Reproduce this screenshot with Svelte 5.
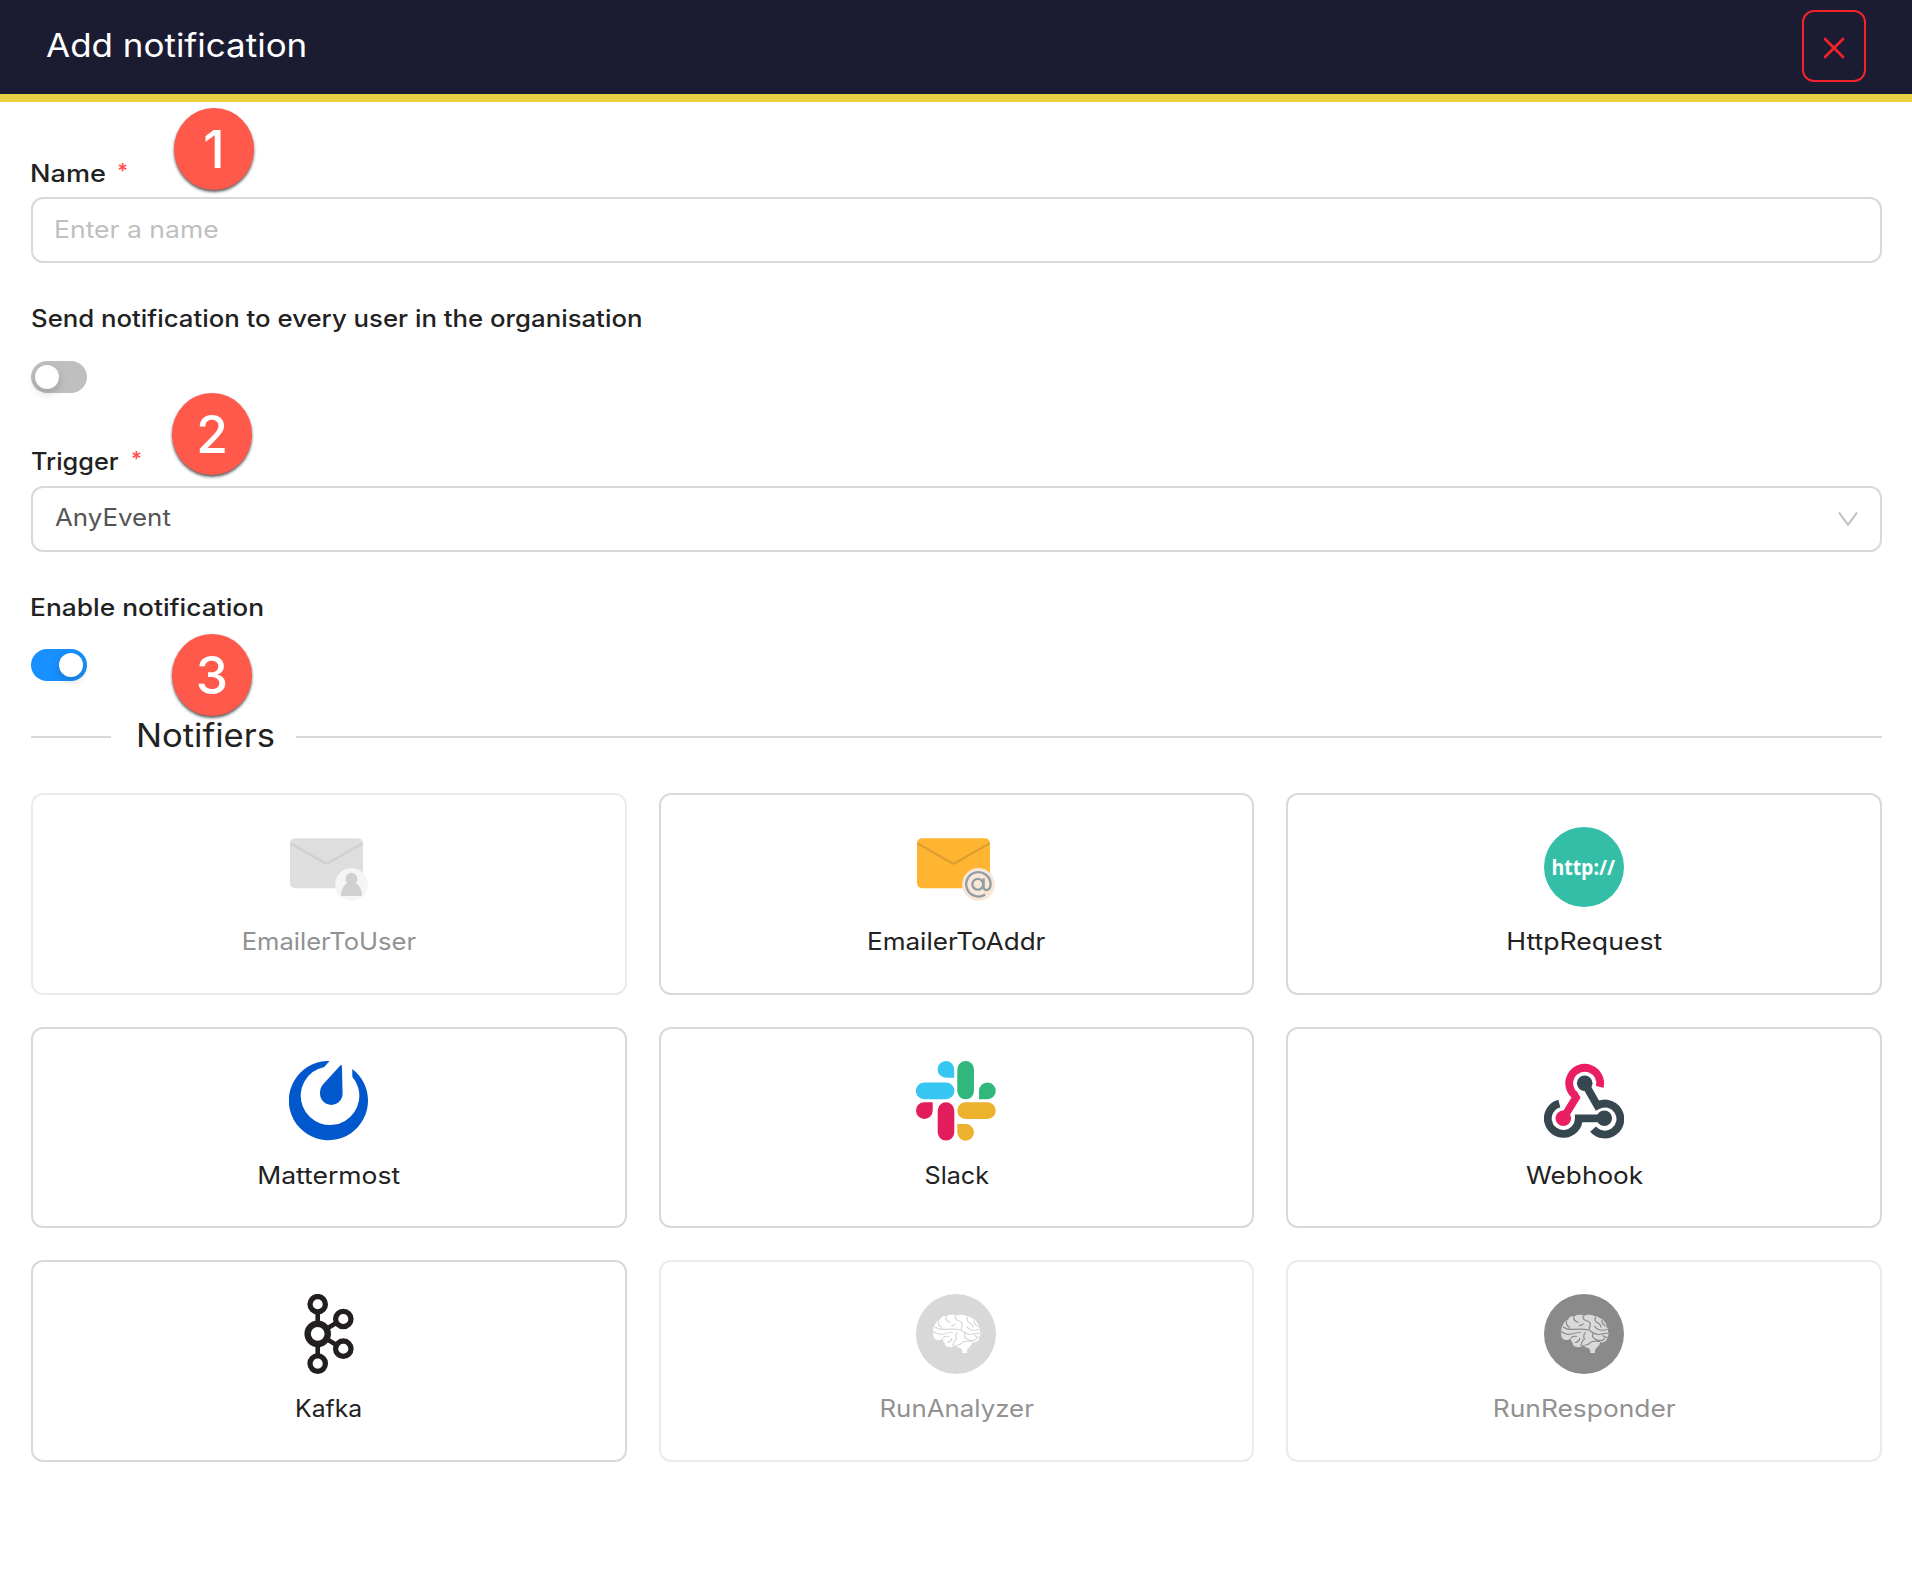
<script>
  const notifiers = [
    { name: 'EmailerToUser', icon: 'user', disabled: true, stretch: 1.065 },
    { name: 'EmailerToAddr', icon: 'addr', stretch: 1.085 },
    { name: 'HttpRequest', icon: 'http', stretch: 1.11 },
    { name: 'Mattermost', icon: 'mattermost', stretch: 1.105 },
    { name: 'Slack', icon: 'slack', stretch: 1.047 },
    { name: 'Webhook', icon: 'webhook', stretch: 1.092 },
    { name: 'Kafka', icon: 'kafka', stretch: 1.03 },
    { name: 'RunAnalyzer', icon: 'brain', disabled: true, disc: '#d8d8d8', lobe: '#fff', stretch: 1.077 },
    { name: 'RunResponder', icon: 'brain', disabled: true, disc: '#8a8a8a', lobe: '#d9d9d9', stretch: 1.099 }
  ];
</script>

<div class="page">
  <header>
    <h1><span class="wide title">Add notification</span></h1>
    <button class="close" aria-label="Close">
      <svg width="24" height="24" viewBox="0 0 24 24"><path d="M3 3 21 21M21 3 3 21" fill="none" stroke="#f5222d" stroke-width="2.6" stroke-linecap="round" /></svg>
    </button>
  </header>

  <main>
    <div class="label first"><span class="wide name">Name</span><span class="star">*</span><span class="badge b1">1</span></div>
    <div class="field"><span class="wide placeholder">Enter a name</span></div>

    <div class="label send"><span class="wide everyone">Send notification to every user in the organisation</span></div>
    <div class="switch"><i></i></div>

    <div class="label trigger"><span class="wide event">Trigger</span><span class="star">*</span><span class="badge b2">2</span></div>
    <div class="field">
      <span class="wide value">AnyEvent</span>
      <svg class="chev" width="24" height="20" viewBox="0 0 24 20"><path d="M3 3.5 12 15.8 21 3.5" fill="none" stroke="#bfbfbf" stroke-width="2" stroke-linejoin="round" /></svg>
    </div>

    <div class="label enable"><span class="wide active">Enable notification</span><span class="badge b3">3</span></div>
    <div class="switch on"><i></i></div>

    <div class="divider"><h2><span class="wide section">Notifiers</span></h2></div>

    <div class="grid">
      {#each notifiers as n}
        <div class="card" class:disabled={n.disabled}>
          <svg width="80" height="80" viewBox="0 0 80 80">
            {#if n.icon === 'user'}
              <rect x="1" y="11.3" width="73" height="50" rx="5" fill="#dedede" />
              <path d="M1.3 16.3 35.8 36q1.7 1 3.4 0L73.7 16.3" fill="none" stroke="#d0d0d0" stroke-width="2.2" />
              <circle cx="62.5" cy="57.5" r="16.4" fill="#f5f5f5" />
              <path d="M52 69c.1-6 2.3-10.500 6.200-13a6 6 0 1 1 8.600 0c3.900 2.500 6.100 7 6.200 13z" fill="#d0d0d0" />
            {:else if n.icon === 'addr'}
              <rect x="1" y="11.3" width="73" height="50" rx="5" fill="#ffb531" />
              <path d="M1.3 16.3 35.8 36q1.7 1 3.4 0L73.7 16.3" fill="none" stroke="#dd9f30" stroke-width="2.2" />
              <circle cx="62.5" cy="57.5" r="16.4" fill="#fae7d7" />
              <g fill="none" stroke="#8f9ea5" stroke-width="2.3">
                <circle cx="61.8" cy="57.3" r="5.400" />
                <path d="M67.6 51.300v8.200c0 5.500 7 4.500 7-2.500a12.200 12.200 0 1 0-5.500 10.500" />
              </g>
            {:else if n.icon === 'http'}
              <circle cx="40" cy="40" r="40" fill="#34bea8" />
              <text x="7.5" y="48" textLength="63.5" lengthAdjust="spacingAndGlyphs" class="http">http://</text>
            {:else if n.icon === 'mattermost'}
              <g fill="#0058cc">
                <path d="M40.6 0A39.600 39.600 0 1 0 63.300 8V15.700A29.300 29.300 0 1 1 35.200 6Z" />
                <path d="M51.300 4.500q1.400-1.300 1.600.5l.7 27.600a11.300 11.300 0 0 1-22.600 0c0-3.600.7-6.200 2.900-9z" />
              </g>
            {:else if n.icon === 'slack'}
              <path d="M38.200 16.700H30A8.300 8.300 0 1 1 38.200 8.400ZM8.300 21.500H30a8.400 8.400 0 0 1 0 16.800H8.300a8.400 8.400 0 0 1 0-16.800Z" fill="#37c5f1" />
              <path d="M63 38.300V30a8.400 8.400 0 1 1 8.400 8.300ZM41.300 8.400a8.350 8.350 0 0 1 16.700 0V30a8.350 8.350 0 0 1-16.700 0Z" fill="#31b67c" />
              <path d="M41.300 63h8.300a8.350 8.350 0 1 1-8.300 8.300ZM49.700 41.200h21.700a8.400 8.400 0 0 1 0 16.800H49.700a8.400 8.400 0 0 1 0-16.800Z" fill="#ecb22e" />
              <path d="M16.700 41.200v8.300A8.350 8.350 0 1 1 8.400 41.200ZM21.700 49.600a8.300 8.300 0 0 1 16.600 0v21.700a8.300 8.300 0 0 1-16.600 0Z" fill="#e11d5b" />
            {:else if n.icon === 'webhook'}
              <g fill="none" stroke-width="7.8">
                <path d="M55.800 25.800A15.500 15.500 0 1 0 31.400 34.700L33.300 34.500 19.300 57.300" stroke="#e91e63" stroke-linejoin="bevel" />
                <path d="M40.700 22.300 53.300 44.500A15.500 15.500 0 1 1 49.100 68.100M15.300 42.400A15.500 15.500 0 1 0 34.800 57.300H60.300" stroke="#37474f" />
              </g>
              <circle cx="19.300" cy="57.300" r="7.800" fill="#e91e63" />
              <circle cx="40.700" cy="22.300" r="7.800" fill="#37474f" />
              <circle cx="60.300" cy="57.300" r="7.800" fill="#37474f" />
            {:else if n.icon === 'kafka'}
              <g fill="none" stroke="#231f20" stroke-width="5.3">
                <circle cx="28.700" cy="10.200" r="7.700" />
                <circle cx="28.700" cy="69.600" r="7.700" />
                <circle cx="54.300" cy="25" r="7.700" />
                <circle cx="54.300" cy="54.700" r="7.700" />
                <circle cx="28.700" cy="39.800" r="10.100" stroke-width="6.400" />
                <path d="M28.700 18v12M28.700 50v12M38 34.500l10-6M38 45.200l10 6" stroke-width="4.600" />
              </g>
            {:else}
              <circle cx="40" cy="40" r="40" fill={n.disc} />
              <path d="M17.300 39.300C17 35 17.500 33 19 31 20 28 21.500 26.500 23.900 26 25 22.500 27.500 21.500 30.900 22 33 20.500 38 20.500 40.700 21.700 43 20.500 48 20.500 50.400 22.300 53 22 55 23 55.800 24.300 58.500 24.500 60 26 60.200 27.700 62 29 62.800 31 62.300 32.700 64 34.500 64.300 36 64 37.700 64.800 39.500 64.500 41.500 63.400 42.700 63.500 45 62.500 46.500 61.800 46.700 60 48.500 57 48.800 56 48 56 50 55 52 53 53.500 51 55 50.800 57 51 59H46.300C46.300 57 46 55.500 45 54.300 42 54 40 52.500 39.500 50.800 38 52.500 35.500 53.500 33.600 53 30.500 53 28.500 51.500 28.700 49 27 47.500 26.500 45.500 27 44 25.500 46.300 20 47 18.400 44.300 17 43 17 41 17.300 39.300Z" fill={n.lobe} />
              <g fill="none" stroke={n.disc} stroke-width="1.200">
                <path d="M22.500 26.500Q21.500 32 26 33.500M19 33Q23 36 30.900 35.300T45 36Q52 41.500 56 40.300T64 39.300" />
                <path d="M17.500 37.500Q22 41.500 27 40T37 38.500M27 44.300Q28 41.500 33 42.500" />
                <path d="M29.800 22Q29 27 34.700 28.500M39 21.500Q39 26 42 26.500 47.500 28 46 32T45.500 35.700M51.800 23Q49.500 27 54 29 57 30.500 57 33.500M58 25.500Q57.500 30 61.500 32M63.500 35.500Q54 38 50.500 32M35 31.500Q38 32 39.500 29.500" />
                <path d="M41.500 38Q38.500 42 40.500 45 37.500 47 37 52M49.500 38.500Q46.500 43 52 45.500T61 44.500M59 40.500Q59 43 63 43.500M40.500 51.500Q45 50.500 46.500 48.500T56 47.300M31 48.500Q35 48 36 44" />
              </g>
            {/if}
          </svg>
          <p style:--stretch={n.stretch}>{n.name}</p>
        </div>
      {/each}
    </div>
  </main>
</div>

<style>
  :global(body) { background: #fff; }
  .page { width: 100%; min-height: 1572px; font-family: Inter, 'Liberation Sans', sans-serif; color: #222; box-sizing: border-box; }
  header { height: 102px; box-sizing: border-box; background: #1b1b32; border-bottom: 8px solid #e9d045; display: flex; align-items: center; justify-content: space-between; padding: 0 46px 2px; }
  h1 { margin: 0; font-size: 32px; font-weight: 400; color: #fff; line-height: 44px; }
  .wide { display: inline-block; transform: scaleX(var(--stretch)); transform-origin: left; white-space: nowrap; }
  .title { --stretch: 1.093; }
  .name { --stretch: 1.13; margin: 0 20px 0 -1px; }
  .placeholder { --stretch: 1.106; color: #bfbfbf; margin: 2px 0 0 -1px; }
  .everyone { --stretch: 1.073; }
  .event { --stretch: 1.054; margin-right: 17px; }
  .value { --stretch: 1.078; color: #555; }
  .active { --stretch: 1.098; margin-left: -1px; }
  .section { --stretch: 1.08; }
  .close { width: 64px; height: 72px; box-sizing: border-box; border: 2px solid #f5222d; border-radius: 12px; background: none; padding: 4px 0 0; display: flex; align-items: center; justify-content: center; }
  main { padding: 49px 30px 0 31px; }
  .label { position: relative; font-size: 24px; font-weight: 500; line-height: 45px; height: 45px; white-space: nowrap; }
  .send { margin-top: 33px; height: 44px; line-height: 46px; }
  .trigger { margin-top: 46px; }
  .enable { margin-top: 33px; height: 44px; line-height: 46px; }
  .star { display: inline-block; color: #ff4d4f; font-size: 20px; font-weight: 600; line-height: 20px; vertical-align: 4px; }
  .field { height: 66px; box-sizing: border-box; border: 2px solid #d9d9d9; border-radius: 12px; margin-top: 1px; padding: 0 20px 3px 22px; display: flex; align-items: center; justify-content: space-between; font-size: 24px; }
  .trigger + .field { margin-top: 2px; }
  .chev { margin-top: 2px; }
  .switch { width: 56px; height: 32px; box-sizing: border-box; border-radius: 16px; background: #bfbfbf; margin-top: 21px; padding: 4px; display: flex; }
  .switch i { width: 24px; height: 24px; border-radius: 50%; background: #fff; box-shadow: 0 4px 8px rgba(0, 35, 11, 0.2); }
  .switch.on { background: #1890ff; justify-content: flex-end; margin-top: 20px; }
  .badge { position: absolute; width: 80px; height: 82px; border-radius: 50%; background: #ff594c; color: #fff; font-size: 51.500px; font-weight: 500; line-height: 82px; text-align: center; box-shadow: 0 2px 3px rgba(0, 0, 0, 0.65); z-index: 1; }
  .b1 { left: 143px; top: -43px; }
  .b2 { left: 141px; top: -46px; }
  .b3 { left: 141px; top: 49px; }
  .divider { display: flex; align-items: center; height: 44px; margin-top: 34px; }
  .divider::before, .divider::after { content: ''; height: 2px; background: #d9d9d9; width: 80px; }
  .divider::after { flex: 1; }
  h2 { margin: 0; padding: 0 31px 3px 25px; font-size: 32px; line-height: 41px; font-weight: 400; }
  .grid { display: grid; grid-template-columns: repeat(3, 1fr); grid-auto-rows: 201.6px; gap: 32px; margin-top: 34px; }
  .card { box-sizing: border-box; border: 2px solid #d9d9d9; border-radius: 12px; padding-top: 32px; display: flex; flex-direction: column; align-items: center; }
  .card svg { display: block; flex: none; }
  .card p { margin: 13px 0 0; font-size: 24px; line-height: 44px; transform: scaleX(var(--stretch)); }
  .disabled { border-color: #ebebeb; color: #929292; }
  .http { font: 700 22px 'Open Sans', sans-serif; fill: #fff; }
</style>
